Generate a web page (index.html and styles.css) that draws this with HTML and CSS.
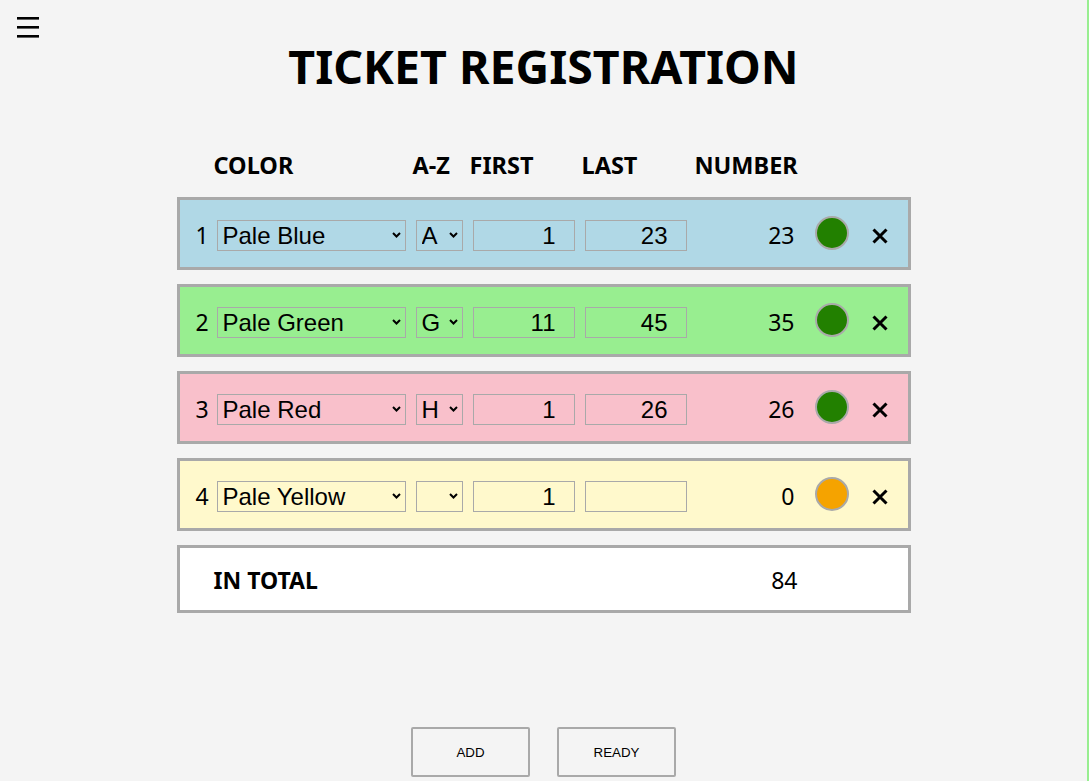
FILE: index.html
```html
<!DOCTYPE html>
<html lang="en">
<head>
<meta charset="utf-8">
<title>Ticket Registration</title>
<link rel="stylesheet" href="styles.css">
</head>
<body>
<div class="page">
  <button class="menu" aria-label="Menu">
    <svg width="22" height="21" viewBox="0 0 22 21"><rect x="0" y="0" width="22" height="2.6" fill="#000"/><rect x="0" y="9" width="22" height="2.6" fill="#000"/><rect x="0" y="18" width="22" height="2.6" fill="#000"/></svg>
  </button>
  <h1 class="title">TICKET REGISTRATION</h1>
  <main class="table">
    <div class="head">
      <span class="h-color">COLOR</span>
      <span class="h-az">A-Z</span>
      <span class="h-first">FIRST</span>
      <span class="h-last">LAST</span>
      <span class="h-number">NUMBER</span>
    </div>

    <div class="row blue">
      <span class="idx">1</span>
      <span class="sel sel-color"><select><option>Pale Blue</option></select><svg class="chev" width="9" height="6" viewBox="0 0 9 6"><path d="M1 1l3.5 3.5L8 1" fill="none" stroke="#000" stroke-width="2"/></svg></span>
      <span class="sel sel-az"><select><option>A</option></select><svg class="chev" width="9" height="6" viewBox="0 0 9 6"><path d="M1 1l3.5 3.5L8 1" fill="none" stroke="#000" stroke-width="2"/></svg></span>
      <input class="inp" type="text" value="1">
      <input class="inp" type="text" value="23">
      <span class="num">23</span>
      <span class="dot ok"></span>
      <span class="del"><svg width="16" height="16" viewBox="0 0 16 16"><path d="M1.5 1.5l13 13M14.5 1.5l-13 13" stroke="#000" stroke-width="3"/></svg></span>
    </div>

    <div class="row green">
      <span class="idx">2</span>
      <span class="sel sel-color"><select><option>Pale Green</option></select><svg class="chev" width="9" height="6" viewBox="0 0 9 6"><path d="M1 1l3.5 3.5L8 1" fill="none" stroke="#000" stroke-width="2"/></svg></span>
      <span class="sel sel-az"><select><option>G</option></select><svg class="chev" width="9" height="6" viewBox="0 0 9 6"><path d="M1 1l3.5 3.5L8 1" fill="none" stroke="#000" stroke-width="2"/></svg></span>
      <input class="inp" type="text" value="11">
      <input class="inp" type="text" value="45">
      <span class="num">35</span>
      <span class="dot ok"></span>
      <span class="del"><svg width="16" height="16" viewBox="0 0 16 16"><path d="M1.5 1.5l13 13M14.5 1.5l-13 13" stroke="#000" stroke-width="3"/></svg></span>
    </div>

    <div class="row red">
      <span class="idx">3</span>
      <span class="sel sel-color"><select><option>Pale Red</option></select><svg class="chev" width="9" height="6" viewBox="0 0 9 6"><path d="M1 1l3.5 3.5L8 1" fill="none" stroke="#000" stroke-width="2"/></svg></span>
      <span class="sel sel-az"><select><option>H</option></select><svg class="chev" width="9" height="6" viewBox="0 0 9 6"><path d="M1 1l3.5 3.5L8 1" fill="none" stroke="#000" stroke-width="2"/></svg></span>
      <input class="inp" type="text" value="1">
      <input class="inp" type="text" value="26">
      <span class="num">26</span>
      <span class="dot ok"></span>
      <span class="del"><svg width="16" height="16" viewBox="0 0 16 16"><path d="M1.5 1.5l13 13M14.5 1.5l-13 13" stroke="#000" stroke-width="3"/></svg></span>
    </div>

    <div class="row yellow">
      <span class="idx">4</span>
      <span class="sel sel-color"><select><option>Pale Yellow</option></select><svg class="chev" width="9" height="6" viewBox="0 0 9 6"><path d="M1 1l3.5 3.5L8 1" fill="none" stroke="#000" stroke-width="2"/></svg></span>
      <span class="sel sel-az"><select><option></option></select><svg class="chev" width="9" height="6" viewBox="0 0 9 6"><path d="M1 1l3.5 3.5L8 1" fill="none" stroke="#000" stroke-width="2"/></svg></span>
      <input class="inp" type="text" value="1">
      <input class="inp" type="text" value="">
      <span class="num">0</span>
      <span class="dot warn"></span>
      <span class="del"><svg width="16" height="16" viewBox="0 0 16 16"><path d="M1.5 1.5l13 13M14.5 1.5l-13 13" stroke="#000" stroke-width="3"/></svg></span>
    </div>

    <div class="total">
      <span class="total-label">IN TOTAL</span>
      <span class="total-num">84</span>
    </div>
  </main>
  <div class="actions">
    <button class="btn">ADD</button>
    <button class="btn">READY</button>
  </div>
</div>
</body>
</html>
```
FILE: styles.css
```css
html, body {
  margin: 0;
  padding: 0;
}
body {
  background: #f4f4f4;
  font-family: "Noto Sans", "Open Sans", sans-serif;
  color: #000;
}
.page {
  position: relative;
  min-height: 100vh;
  border-right: 2px solid #98ee90;
  box-sizing: border-box;
  overflow: hidden;
}
.menu {
  position: absolute;
  left: 17px;
  top: 17px;
  padding: 0;
  margin: 0;
  border: 0;
  background: none;
  line-height: 0;
}
.title {
  margin: 0;
  padding-top: 36px;
  height: 60px;
  line-height: 60px;
  text-align: center;
  font-size: 46.5px;
  font-weight: 700;
}
.table {
  width: 734px;
  margin: 51px auto 0;
}
.head {
  display: flex;
  align-items: center;
  height: 36px;
  padding-left: 37px;
  margin-bottom: 14px;
  font-size: 23.5px;
  font-weight: 700;
}
.h-color { width: 189px; }
.h-az { width: 47px; margin-left: 10px; }
.h-first { width: 102px; margin-left: 10px; }
.h-last { width: 102px; margin-left: 10px; }
.h-number { margin-left: 11px; }

.row {
  display: flex;
  align-items: center;
  height: 31px;
  border: 3px solid #a9a9a9;
  padding: 20px 0 16px 16px;
  margin-bottom: 14px;
  font-size: 23px;
}
.blue { background: #b0d8e6; }
.green { background: #98ee90; }
.red { background: #f9c0cb; }
.yellow { background: #fff9cc; }

.idx { width: 21px; line-height: 31px; }
.sel {
  position: relative;
  display: block;
  height: 31px;
}
.sel select {
  appearance: none;
  -webkit-appearance: none;
  display: block;
  width: 100%;
  height: 31px;
  margin: 0;
  border: 1px solid #a9a9a9;
  border-radius: 0;
  background: transparent;
  font-family: "Liberation Sans", Arial, sans-serif;
  font-size: 24px;
  line-height: 29px;
  color: #000;
  padding: 0 0 0 5px;
  box-sizing: border-box;
}
.chev {
  position: absolute;
  right: 5px;
  top: 12px;
  pointer-events: none;
}
.sel-color { width: 189px; }
.sel-az { width: 47px; margin-left: 10px; }
.inp {
  display: block;
  width: 102px;
  height: 31px;
  margin: 0 0 0 10px;
  box-sizing: border-box;
  border: 1px solid #a9a9a9;
  background: transparent;
  font-family: "Liberation Sans", Arial, sans-serif;
  font-size: 24px;
  text-align: right;
  padding: 0 18px 0 0;
  color: #000;
}
.num {
  width: 108px;
  text-align: right;
  line-height: 31px;
}
.dot {
  flex: none;
  width: 34px;
  height: 34px;
  box-sizing: border-box;
  border-radius: 50%;
  border: 2px solid #a9a9a9;
  margin-left: 20px;
  margin-top: -6px;
}
.ok { background: #228000; }
.warn { background: #f5a300; }
.del {
  width: 22px;
  margin-left: 20px;
  display: flex;
  justify-content: center;
  line-height: 0;
}

.total {
  display: flex;
  align-items: center;
  border: 3px solid #a9a9a9;
  background: #fff;
  padding: 2px 0 0 34px;
  height: 59px;
  box-sizing: content-box;
  font-size: 23px;
}
.total-label { font-weight: 700; width: 504px; }
.total-num { width: 80px; text-align: right; }

.total {
  height: 60px;
}

.actions {
  display: flex;
  justify-content: center;
  gap: 27px;
  margin-top: 114px;
}
.btn {
  width: 119px;
  height: 50px;
  border: 2px solid #a9a9a9;
  border-radius: 2px;
  background: transparent;
  font-family: "Liberation Sans", Arial, sans-serif;
  font-size: 13.3333px;
  color: #000;
  padding: 0;
}
```
